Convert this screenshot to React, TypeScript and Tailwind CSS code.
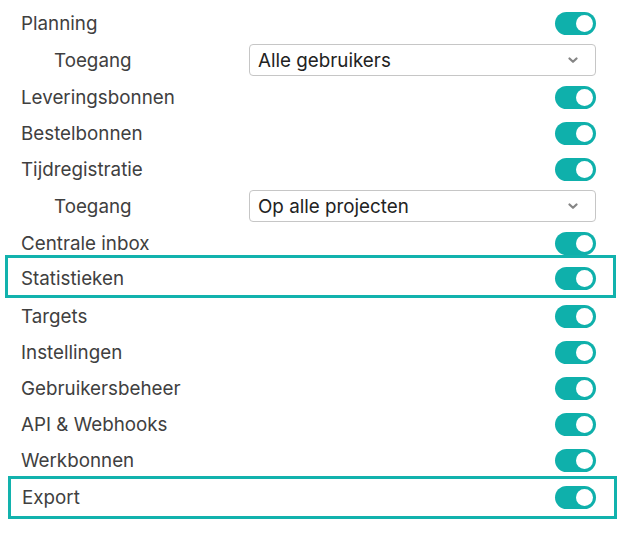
import React from "react";

const Toggle = () => (
  <div className="relative h-[23px] w-[41px] shrink-0 rounded-full bg-[#0fb0ab]">
    <div className="absolute right-[3px] top-[3px] h-[17px] w-[17px] rounded-full bg-white" />
  </div>
);

const Chevron = () => (
  <svg width="10" height="7" viewBox="0 0 10 7" className="shrink-0">
    <path d="M1.5 1.5 L5 4.8 L8.5 1.5" fill="none" stroke="#858585" strokeWidth="2.2" strokeLinecap="round" strokeLinejoin="round" />
  </svg>
);

const Row = ({ label }: { label: string }) => (
  <div className="flex h-[36px] items-center justify-between pl-[21px] pr-[45px]">
    <span className="pt-[2px]">{label}</span>
    <Toggle />
  </div>
);

const SelectRow = ({ value }: { value: string }) => (
  <div className="flex h-[38px] items-center pl-[54px] pr-[45px]">
    <span className="w-[195px] shrink-0 pt-[2px]">Toegang</span>
    <div className="flex h-[32px] flex-1 items-center justify-between rounded-[4px] border border-[#c6c6c6] bg-white pl-[8px] pr-[17px] text-[#222]">
      <span className="pt-[2px]">{value}</span>
      <Chevron />
    </div>
  </div>
);

export default function App() {
  return (
    <div
      className="h-[535px] w-[641px] bg-white pt-[5px] text-[18.8px] leading-none text-[#404040]"
      style={{ fontFamily: "Inter, 'Noto Sans', sans-serif" }}
    >
      <Row label="Planning" />
      <SelectRow value="Alle gebruikers" />
      <Row label="Leveringsbonnen" />
      <Row label="Bestelbonnen" />
      <Row label="Tijdregistratie" />
      <SelectRow value="Op alle projecten" />
      <Row label="Centrale inbox" />
      <div className="relative z-10 -mt-[6px] ml-[5px] w-[611px] border-[3px] border-[#12b2ad] bg-white">
        <div className="flex h-[37px] items-center justify-between pl-[13px] pr-[17px] pt-[4px]">
          <span className="pt-[2px]">Statistieken</span>
          <Toggle />
        </div>
      </div>
      <Row label="Targets" />
      <Row label="Instellingen" />
      <Row label="Gebruikersbeheer" />
      <Row label="API & Webhooks" />
      <Row label="Werkbonnen" />
      <div className="relative z-10 -mt-[2px] ml-[8px] w-[609px] border-[3px] border-[#12b2ad] bg-white">
        <div className="flex h-[37px] items-center justify-between pl-[11px] pr-[18px]">
          <span className="pt-[2px]">Export</span>
          <Toggle />
        </div>
      </div>
    </div>
  );
}
